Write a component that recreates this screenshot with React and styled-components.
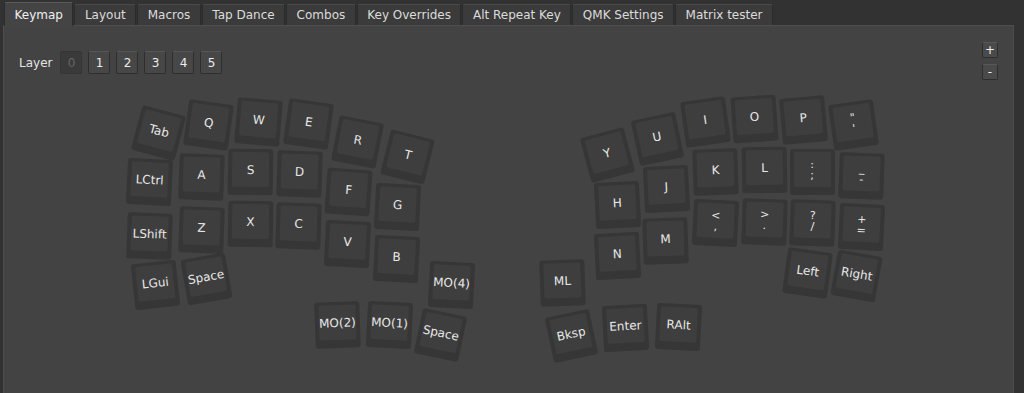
import React from 'react';
import styled, { createGlobalStyle } from 'styled-components';

const GlobalStyle = createGlobalStyle`
  html, body {
    margin: 0;
    padding: 0;
    background: #323232;
  }
  body {
    font-family: "DejaVu Sans", "Liberation Sans", sans-serif;
    color: #e6e6e6;
  }
`;

const TABS = [
  'Keymap', 'Layout', 'Macros', 'Tap Dance', 'Combos',
  'Key Overrides', 'Alt Repeat Key', 'QMK Settings', 'Matrix tester',
];

// canvas origin in page coords
const OX = 4;
const OY = 82;
const KW = 45;
const KH = 46;

// [label, centerX, centerY, rotation]
const KEYS = [
  ['Tab', 158, 131, 15], ['Q', 208, 123, 8], ['W', 258, 120, 5], ['E', 308, 122, 8],
  ['R', 357, 140, 11], ['T', 407, 155, 14],
  ['LCtrl', 149, 180, 3], ['A', 201, 175, 2], ['S', 250, 170, 1], ['D', 299, 172, 2],
  ['F', 348, 190, 4], ['G', 397, 205, 3],
  ['LShift', 149, 234, 2], ['Z', 201, 228, 2], ['X', 250, 222, 1], ['C', 298, 224, 2],
  ['V', 347, 242, 3], ['B', 396, 257, 3],
  ['LGui', 155, 283, -6], ['Space', 206, 277, -10],
  ['MO(4)', 451, 283, 3], ['MO(2)', 337, 323, -2], ['MO(1)', 389, 323, 3], ['Space', 440, 333, 12],

  ['Y', 607, 153, -15], ['U', 657, 137, -12], ['I', 705, 120, -8], ['O', 754, 117, -4],
  ['P', 803, 118, -5], ['"\n\'', 853, 123, -8],
  ['H', 617, 203, -3], ['J', 666, 187, -3], ['K', 715, 170, -2], ['L', 764, 168, -1],
  [':\n;', 812, 170, 0], ['_\n-', 861, 174, 2],
  ['N', 617, 254, -3], ['M', 665, 239, -2], ['<\n,', 715, 221, 3], ['>\n.', 764, 220, 2],
  ['?\n/', 812, 221, 2], ['+\n=', 861, 225, 3],
  ['ML', 562, 281, -2], ['Left', 807, 271, 8], ['Right', 856, 274, 10],
  ['Bksp', 571, 334, -12], ['Enter', 625, 326, -3], ['RAlt', 678, 325, 3],
];

const Window = styled.div`
  width: 1024px;
  height: 393px;
  display: flex;
  flex-direction: column;
  background: #323232;
  overflow: hidden;
`;

const TabBar = styled.div`
  display: flex;
  align-items: flex-end;
  height: 25px;
  padding-left: 4px;
  gap: 1px;
  flex-shrink: 0;
`;

const Tab = styled.div`
  box-sizing: border-box;
  height: ${p => (p.$active ? 24 : 21)}px;
  padding: 0 9.5px;
  display: flex;
  align-items: center;
  justify-content: center;
  font-size: 12px;
  color: ${p => (p.$active ? '#f0f0f0' : '#dcdcdc')};
  background: ${p => (p.$active ? '#444444' : '#3b3b3b')};
  border: 1px solid #2b2b2b;
  border-top-color: ${p => (p.$active ? '#5a5a5a' : '#4a4a4a')};
  border-bottom: none;
  border-radius: 2px 2px 0 0;
  white-space: nowrap;
  margin-bottom: ${p => (p.$active ? '-1px' : '0')};
  position: relative;
  z-index: ${p => (p.$active ? 1 : 0)};
`;

const Panel = styled.div`
  flex: 1;
  display: flex;
  flex-direction: column;
  margin: 0 10px 0 3px;
  background: #434343;
  border: 1px solid #4e4e4e;
  border-bottom: none;
  min-height: 0;
`;

const Header = styled.div`
  height: 56px;
  box-sizing: border-box;
  padding: 16px 15px 0 15px;
  display: flex;
  justify-content: space-between;
  align-items: flex-start;
  flex-shrink: 0;
`;

const LayerGroup = styled.div`
  display: flex;
  align-items: center;
  margin-top: 9px;
`;

const LayerLabel = styled.span`
  font-size: 12px;
  color: #e4e4e4;
  margin-right: 8px;
`;

const LayerButtons = styled.div`
  display: flex;
  gap: 6px;
`;

const LayerButton = styled.div`
  box-sizing: border-box;
  width: 22px;
  height: 23px;
  display: flex;
  align-items: center;
  justify-content: center;
  font-size: 12px;
  border-radius: 2px;
  border: 1px solid ${p => (p.$active ? '#353535' : '#2e2e2e')};
  border-top-color: ${p => (p.$active ? '#353535' : '#565656')};
  background: ${p => (p.$active ? '#3a3a3a' : '#474747')};
  color: ${p => (p.$active ? '#656565' : '#ececec')};
`;

const ZoomButtons = styled.div`
  display: flex;
  flex-direction: column;
  gap: 6px;
`;

const ZoomButton = styled.div`
  box-sizing: border-box;
  width: 16px;
  height: 16px;
  display: flex;
  align-items: center;
  justify-content: center;
  font-size: 12px;
  line-height: 1;
  border-radius: 2px;
  border: 1px solid #2e2e2e;
  border-top-color: #585858;
  background: #4a4a4a;
  color: #f0f0f0;
`;

const Canvas = styled.div`
  flex: 1;
  position: relative;
`;

const KeyCap = styled.div`
  position: absolute;
  left: ${p => p.$x}px;
  top: ${p => p.$y}px;
  width: ${KW}px;
  height: ${KH}px;
  box-sizing: border-box;
  padding: 3px 4px 8px 4px;
  background: #363636;
  border-radius: 3px;
  transform: rotate(${p => p.$r}deg);
`;

const KeyFace = styled.div`
  width: 100%;
  height: 100%;
  background: #3e3e3e;
  border-radius: 2px;
  display: flex;
  flex-direction: column;
  align-items: center;
  justify-content: center;
  font-size: ${p => (p.$multi ? 11 : 12)}px;
  line-height: ${p => (p.$multi ? 11 : 14)}px;
  color: #e8e8e8;
  white-space: nowrap;
`;

const Key = ({ label, x, y, r }) => {
  const lines = label.split('\n');
  return (
    <KeyCap $x={x - OX - KW / 2} $y={y - OY - KH / 2 + 2} $r={r}>
      <KeyFace $multi={lines.length > 1}>
        {lines.map((l, i) => <span key={i}>{l}</span>)}
      </KeyFace>
    </KeyCap>
  );
};

export default function App() {
  return (
    <>
      <GlobalStyle />
      <Window>
        <TabBar>
          {TABS.map((t, i) => <Tab key={t} $active={i === 0}>{t}</Tab>)}
        </TabBar>
        <Panel>
          <Header>
            <LayerGroup>
              <LayerLabel>Layer</LayerLabel>
              <LayerButtons>
                {[0, 1, 2, 3, 4, 5].map(n => (
                  <LayerButton key={n} $active={n === 0}>{n}</LayerButton>
                ))}
              </LayerButtons>
            </LayerGroup>
            <ZoomButtons>
              <ZoomButton>+</ZoomButton>
              <ZoomButton>-</ZoomButton>
            </ZoomButtons>
          </Header>
          <Canvas>
            {KEYS.map(([label, x, y, r], i) => (
              <Key key={i} label={label} x={x} y={y} r={r} />
            ))}
          </Canvas>
        </Panel>
      </Window>
    </>
  );
}
